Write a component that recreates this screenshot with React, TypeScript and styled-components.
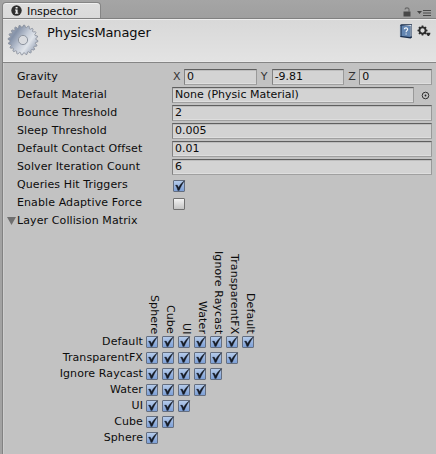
import React from "react";
import styled, { createGlobalStyle, css } from "styled-components";

const Global = createGlobalStyle`
  * { box-sizing: border-box; }
  body { margin: 0; background: #a2a2a2; font-family: "DejaVu Sans", Verdana, sans-serif; font-size: 11px; color: #0c0c0c; }
`;

const Window = styled.div`
  width: 436px; height: 454px; overflow: hidden; padding-left: 2px;
  display: flex; flex-direction: column; background: #a2a2a2;
`;
const TabBar = styled.div`
  height: 18px; flex: none; display: flex; justify-content: space-between; align-items: flex-end;
  background: linear-gradient(#a5a5a5, #9f9f9f);
`;
const Tab = styled.div`
  width: 99px; height: 16px; padding: 0 0 0 8px; display: flex; align-items: center; gap: 5px;
  background: linear-gradient(#dfdfdf, #dadada); border: 1px solid #858585; border-bottom: 0;
  border-radius: 4px 4px 0 0; box-shadow: inset 0 1px #f0f0f0;
`;
const TabTitle = styled.span`
  font-size: 11px; letter-spacing: -0.1px; line-height: 14px; padding-top: 2px;
`;
const TabTools = styled.div`
  display: flex; align-items: flex-end; gap: 6px; padding: 0 5px 1px 0;
`;
const Panel = styled.div`
  flex: 1; border-left: 1px solid #828282; background: #c2c2c2;
  display: flex; flex-direction: column; 
`;
const Header = styled.header`
  height: 45px; flex: none; display: flex; align-items: flex-start; padding: 5px 4px 0 4px;
  background: linear-gradient(#d8d8d8, #e3e3e3); border-top: 1px solid #808080; border-bottom: 1px solid #858585;
  box-shadow: inset 0 1px #eeeeee, inset 0 -1px #e9e9e9;
`;
const Title = styled.h1`
  margin: 1px 0 0 8px; flex: 1; font-size: 13px; font-weight: 400; line-height: 15px; letter-spacing: -0.1px;
`;
const HeaderTools = styled.div`display: flex; gap: 4px; padding-right: 1px;`;
const Body = styled.main`
  flex: 1; border-left: 1px solid #cecece; padding: 6px 4px 0 1px; display: flex; flex-direction: column; gap: 2px;
`;
const Row = styled.div`height: 16px; flex: none; display: flex; align-items: center;`;
const Arrow = styled.div`width: 12px; height: 16px; flex: none; display: flex; align-items: center; justify-content: center;`;
const Label = styled.span`width: 155px; flex: none; white-space: nowrap; line-height: 16px; letter-spacing: 0.1px;`;
const Field = styled.div<{ $w?: number }>`
  ${(p) => (p.$w ? css`width: ${p.$w}px;` : css`flex: 1;`)}
  height: 16px; padding: 0 3px 0 2px; line-height: 14px; white-space: nowrap;
  background: #d3d3d3; border: 1px solid; border-color: #5f5f5f #999 #a0a0a0 #828282;
  box-shadow: inset 0 1px #bdbdbd, inset 0 -1px #dedede;
`;
const Axis = styled.span<{ $first?: boolean }>`
  width: ${(p) => (p.$first ? 12 : 15)}px; padding-left: ${(p) => (p.$first ? 1 : 4)}px; line-height: 16px; color: #333;
`;
const Picker = styled.div`width: 18px; padding-left: 7px; display: flex;`;
const Box = styled.span<{ $on?: boolean }>`
  width: 12px; height: 12px; flex: none; display: block; border: 1px solid ${(p) => (p.$on ? "#646e80" : "#707070")};
  border-radius: 1px;
  background: ${(p) => (p.$on ? "linear-gradient(#b5cbea, #7d9fd6)" : "linear-gradient(#f2f2f2, #c4c4c4)")};
  svg { display: block; margin: -2px; }
`;
const BoxSlot = styled.div`padding: 1px 0 0 1px;`;
const Matrix = styled.section`margin-top: 4px; display: flex; flex-direction: column;`;
const ColumnLabels = styled.div`height: 99px; padding-left: 141px; display: flex; align-items: flex-end;`;
const ColumnLabel = styled.span`
  width: 16px; writing-mode: vertical-rl; white-space: nowrap; line-height: 16px; letter-spacing: 0.1px;
`;
const MatrixRow = styled.div`height: 16px; display: flex; align-items: center; gap: 4px;`;
const RowLabel = styled.span`width: 138px; margin-right: -1px; text-align: right; line-height: 16px; letter-spacing: 0.1px;`;

const Check = ({ on }: { on?: boolean }) => (
  <Box $on={on}>
    {on && (
      <svg width="14" height="14" viewBox="0 0 14 14">
        <path d="M3.4 6.3 5.2 6 6.6 8.4C8 5.8 9.8 3.3 12.8 1.4 10.5 4.5 8.8 7.8 7.2 11.4L5.8 11.4C5.2 9.2 4.5 7.6 3.4 6.3Z" fill="#161b26" stroke="#161b26" strokeWidth=".3" />
      </svg>
    )}
  </Box>
);

const InfoIcon = () => (
  <svg width="11" height="11" viewBox="0 0 11 11">
    <circle cx="5.5" cy="5.5" r="5.2" fill="#2e2e2e" />
    <path d="M4.6 2h2v1.6h-2zM4 4.5h2.6v3.2h.7v1H4v-1h.7V5.5H4z" fill="#eee" />
  </svg>
);

const teeth = (n: number, c: number, outer: number, inner: number) =>
  Array.from({ length: n * 4 }, (_, i) => {
    const r = i % 4 < 2 ? outer : inner;
    const a = ((i + 0.5) / (n * 4)) * Math.PI * 2;
    return `${(c + r * Math.cos(a)).toFixed(2)},${(c + r * Math.sin(a)).toFixed(2)}`;
  }).join(" ");

const BigGear = () => (
  <svg width="32" height="32" viewBox="0 0 32 32">
    <defs>
      <linearGradient id="steel" x1="0" y1="0.15" x2="1" y2="0.85">
        <stop offset="0" stopColor="#a5afbf" />
        <stop offset=".22" stopColor="#8592a8" />
        <stop offset=".5" stopColor="#c5ccd8" />
        <stop offset=".68" stopColor="#e0e4ea" />
        <stop offset="1" stopColor="#8996ad" />
      </linearGradient>
    </defs>
    <polygon points={teeth(20, 16, 14.9, 12.9)} fill="url(#steel)" stroke="#858c98" strokeWidth=".8" />
    <circle cx="16" cy="16" r="4.6" fill="#d9dbdf" stroke="#8d949f" />
  </svg>
);

const BookIcon = () => (
  <svg width="14" height="15" viewBox="0 0 14 15">
    <path d="M1 1 2.5.3H13v13.2l-1.4 1L1 13z" fill="#172b49" />
    <path d="M2.5 1.4 11.3 2v11L2.5 12z" fill="#6386b2" />
    <path d="M3.5 1h9v11.6h-1V2z" fill="#d9e1ec" />
    <path d="M1.4 1.5v11" stroke="#8299b8" strokeWidth=".8" />
    <path d="M5.3 5.3C5.4 3.4 8.9 3.5 8.6 5.5 8.5 6.6 7.1 6.7 7.1 8.2M7.1 9.4v1.2" fill="none" stroke="#f4f7fb" strokeWidth="1.2" />
  </svg>
);

const MenuGear = () => (
  <svg width="14" height="14" viewBox="0 0 14 14">
    <g stroke="#2c2c2c" fill="none">
      <circle cx="5.5" cy="6.5" r="3.1" strokeWidth="1.9" />
      <path d="M5.5 1.5v1.8M5.5 9.7v1.8M.5 6.5h1.8M8.7 6.5h1.8M2 3l1.3 1.3M7.7 8.7 9 10M2 10l1.3-1.3M7.7 4.3 9 3" strokeWidth="1.7" />
    </g>
    <path d="M9.3 8.8h4v1.3l-1.3 2h-1.2l-1.5-2z" fill="#2c2c2c" />
  </svg>
);

const LockIcon = () => (
  <svg width="8" height="10" viewBox="0 0 8 10">
    <path d="M.5 4.5h7V9.5h-7z" fill="#484848" />
    <path d="M2 2.5C2 .5 6 .2 6 2.6V5" fill="none" stroke="#666" strokeWidth="1.1" />
  </svg>
);

const MenuIcon = () => (
  <svg width="14" height="8" viewBox="0 0 14 8">
    <path d="M0 2h5L2.5 5z" fill="#444" />
    <path d="M6 1.5h8M6 4h8M6 6.5h8" stroke="#4a4a4a" />
  </svg>
);

const layers = ["Default", "TransparentFX", "Ignore Raycast", "Water", "UI", "Cube", "Sphere"];

const NumberRow = ({ label, value }: { label: string; value: string }) => (
  <Row><Arrow /><Label>{label}</Label><Field>{value}</Field></Row>
);

export default function App() {
  return (
    <>
      <Global />
      <Window>
        <TabBar>
          <Tab><InfoIcon /><TabTitle>Inspector</TabTitle></Tab>
          <TabTools><LockIcon /><MenuIcon /></TabTools>
        </TabBar>
        <Panel>
          <Header>
            <BigGear />
            <Title>PhysicsManager</Title>
            <HeaderTools><BookIcon /><MenuGear /></HeaderTools>
          </Header>
          <Body>
            <Row>
              <Arrow /><Label>Gravity</Label>
              <Axis $first>X</Axis><Field $w={73}>0</Field>
              <Axis>Y</Axis><Field $w={73}>-9.81</Field>
              <Axis>Z</Axis><Field $w={73}>0</Field>
            </Row>
            <Row>
              <Arrow /><Label>Default Material</Label><Field>None (Physic Material)</Field>
              <Picker>
                <svg width="9" height="9" viewBox="0 0 9 9">
                  <circle cx="4.5" cy="4.5" r="3.3" fill="none" stroke="#303030" />
                  <circle cx="4.5" cy="4.5" r=".9" fill="#202020" />
                </svg>
              </Picker>
            </Row>
            <NumberRow label="Bounce Threshold" value="2" />
            <NumberRow label="Sleep Threshold" value="0.005" />
            <NumberRow label="Default Contact Offset" value="0.01" />
            <NumberRow label="Solver Iteration Count" value="6" />
            <Row><Arrow /><Label>Queries Hit Triggers</Label><BoxSlot><Check on /></BoxSlot></Row>
            <Row><Arrow /><Label>Enable Adaptive Force</Label><BoxSlot><Check /></BoxSlot></Row>
            <Row>
              <Arrow><svg width="9" height="8" viewBox="0 0 9 8"><path d="M0 0h9L4.5 8z" fill="#6f6f6f" /></svg></Arrow>
              <Label>Layer Collision Matrix</Label>
            </Row>
            <Matrix>
              <ColumnLabels>
                {[...layers].reverse().map((name) => <ColumnLabel key={name}>{name}</ColumnLabel>)}
              </ColumnLabels>
              {layers.map((name, row) => (
                <MatrixRow key={name}>
                  <RowLabel>{name}</RowLabel>
                  {layers.slice(row).map((other) => <Check key={other} on />)}
                </MatrixRow>
              ))}
            </Matrix>
          </Body>
        </Panel>
      </Window>
    </>
  );
}
